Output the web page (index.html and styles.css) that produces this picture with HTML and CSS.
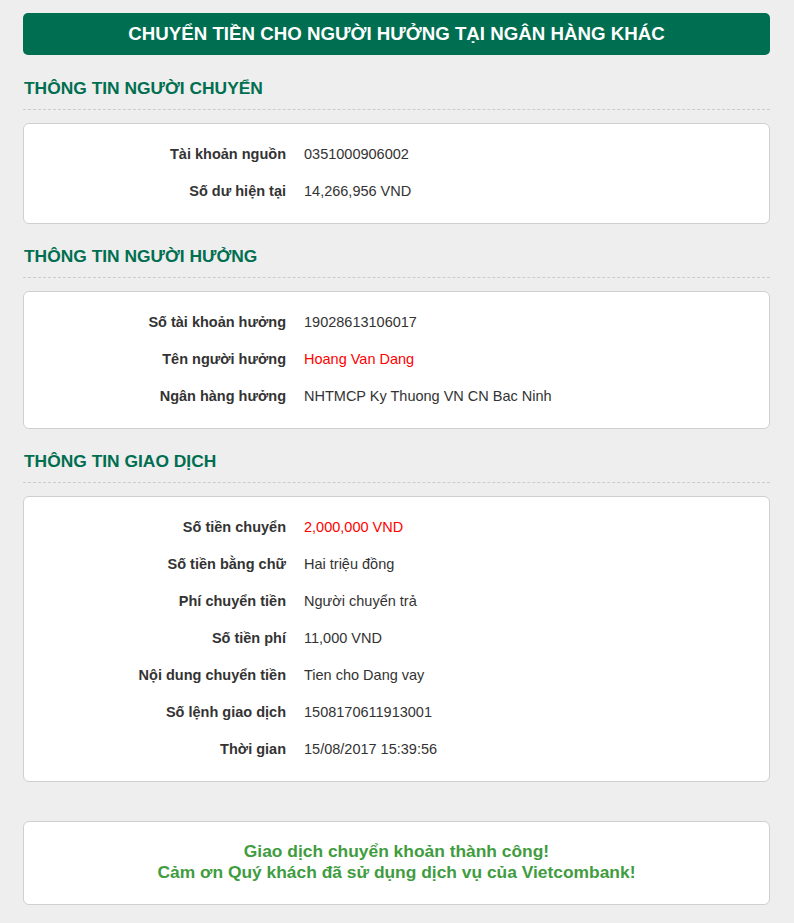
FILE: index.html
```html
<!DOCTYPE html>
<html lang="vi">
<head>
<meta charset="utf-8">
<title>Chuyển tiền</title>
<link rel="stylesheet" href="styles.css">
</head>
<body>
<div class="page">
  <div class="title-bar">CHUYỂN TIỀN CHO NGƯỜI HƯỞNG TẠI NGÂN HÀNG KHÁC</div>

  <h2 class="section-title first">THÔNG TIN NGƯỜI CHUYỂN</h2>
  <div class="card">
    <div class="row"><div class="label">Tài khoản nguồn</div><div class="value">0351000906002</div></div>
    <div class="row"><div class="label">Số dư hiện tại</div><div class="value">14,266,956 VND</div></div>
  </div>

  <h2 class="section-title">THÔNG TIN NGƯỜI HƯỞNG</h2>
  <div class="card">
    <div class="row"><div class="label">Số tài khoản hưởng</div><div class="value">19028613106017</div></div>
    <div class="row"><div class="label">Tên người hưởng</div><div class="value red">Hoang Van Dang</div></div>
    <div class="row"><div class="label">Ngân hàng hưởng</div><div class="value">NHTMCP Ky Thuong VN CN Bac Ninh</div></div>
  </div>

  <h2 class="section-title">THÔNG TIN GIAO DỊCH</h2>
  <div class="card">
    <div class="row"><div class="label">Số tiền chuyển</div><div class="value red">2,000,000 VND</div></div>
    <div class="row"><div class="label">Số tiền bằng chữ</div><div class="value">Hai triệu đồng</div></div>
    <div class="row"><div class="label">Phí chuyển tiền</div><div class="value">Người chuyển trả</div></div>
    <div class="row"><div class="label">Số tiền phí</div><div class="value">11,000 VND</div></div>
    <div class="row"><div class="label">Nội dung chuyển tiền</div><div class="value">Tien cho Dang vay</div></div>
    <div class="row"><div class="label">Số lệnh giao dịch</div><div class="value">1508170611913001</div></div>
    <div class="row"><div class="label">Thời gian</div><div class="value">15/08/2017 15:39:56</div></div>
  </div>

  <div class="card success">
    <p>Giao dịch chuyển khoản thành công!</p>
    <p>Cảm ơn Quý khách đã sử dụng dịch vụ của Vietcombank!</p>
  </div>
</div>
</body>
</html>
```

FILE: styles.css
```css
html, body {
  margin: 0;
  padding: 0;
  background: #eeeeee;
}
body {
  font-family: "Liberation Sans", Arial, sans-serif;
  color: #333333;
}
.page {
  padding: 13px 24px 18px 23px;
}
.title-bar {
  background: #006e50;
  color: #ffffff;
  border-radius: 5px;
  height: 42px;
  line-height: 42px;
  text-align: center;
  font-weight: bold;
  font-size: 18.7px;
}
.section-title {
  margin: 22px 0 13px 0;
  padding: 0 0 11px 1px;
  font-size: 17.4px;
  line-height: 20px;
  font-weight: bold;
  color: #006e50;
  border-bottom: 1px dashed #cccccc;
}
.section-title.first {
  margin-top: 23px;
}
.card {
  background: #ffffff;
  border: 1px solid #cfcfcf;
  border-radius: 6px;
  padding: 11px 0 14px 0;
}
.row {
  display: grid;
  grid-template-columns: 262px 1fr;
  column-gap: 18px;
  height: 37px;
  align-items: center;
  font-size: 14.5px;
}
.label {
  text-align: right;
  font-weight: bold;
  color: #333333;
}
.value {
  color: #333333;
}
.value.red {
  color: #ff0000;
}
.success {
  margin-top: 39px;
  padding: 19px 0 21px 0;
  text-align: center;
  color: #3f9c3f;
  font-weight: bold;
  font-size: 17.4px;
  line-height: 21px;
}
.success p {
  margin: 0;
}
```
